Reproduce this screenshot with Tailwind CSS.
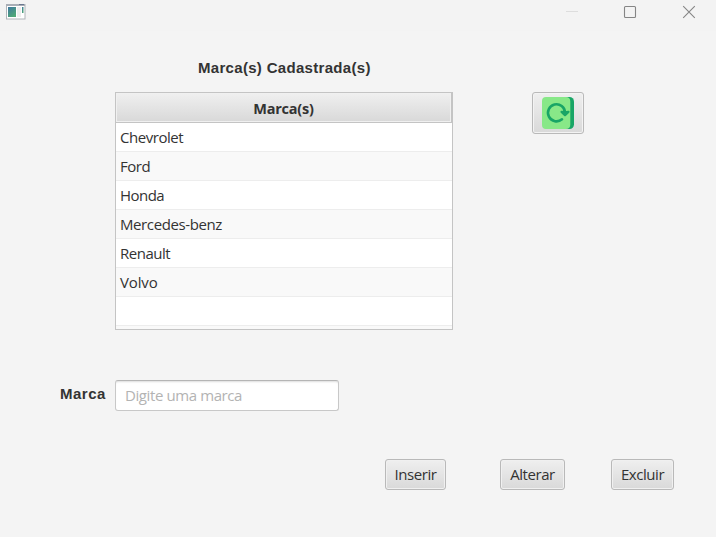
<!DOCTYPE html>
<html lang="pt-BR">
<head>
<meta charset="utf-8">
<title>Marcas</title>
<script src="https://cdn.jsdelivr.net/npm/@tailwindcss/browser@4"></script>
</head>
<body class="w-[716px] h-[537px] overflow-hidden bg-[#f4f4f4] text-[#333333] font-['Open_Sans','Noto_Sans',sans-serif] text-[15px] leading-5">
<header class="h-[31px] bg-[#f3f3f3] flex items-start justify-between">
  <svg class="ml-[6px] mt-1" width="20" height="16" viewBox="0 0 20 16">
    <defs><linearGradient id="g" x1="0" y1="0" x2="0.6" y2="1"><stop offset="0" stop-color="#3f78a0"/><stop offset="1" stop-color="#4fa877"/></linearGradient></defs>
    <rect x="0.5" y="0.5" width="18.5" height="14.5" fill="#fff" stroke="#b0b4b9"/>
    <rect x="0" y="0" width="19" height="2" fill="#a9aeb6"/><rect x="13" y="0" width="5" height="1" fill="#6b7890"/>
    <rect x="2" y="3" width="8" height="10" fill="url(#g)"/>
    <rect x="11" y="3" width="4" height="10" fill="#eeeeee"/>
    <rect x="16" y="3" width="1.5" height="6" fill="url(#g)"/>
  </svg>
  <svg class="mr-5" width="131" height="24" viewBox="0 0 131 24" fill="none" stroke="#858585">
    <path d="M1 11.5h12" stroke="#dddddd"/>
    <rect x="59.5" y="6.5" width="11" height="11" rx="1" stroke-width="1.1"/>
    <path d="M118.2 6.2l11.6 11.6M129.8 6.2l-11.6 11.6" stroke-width="1.1"/>
  </svg>
</header>
<main>
  <h1 class="ml-[198px] mt-[27px] h-[34px] font-['Liberation_Sans',sans-serif] font-bold text-[15px] tracking-[0.31px] leading-5 whitespace-nowrap">Marca(s) Cadastrada(s)</h1>
  <div class="flex items-start ml-[115px] gap-[79px]">
    <div class="w-[338px] h-[238px] border border-[#c4c4c4] bg-white overflow-hidden">
      <div class="h-[30px] border-b border-r border-[#c4c4c4] bg-[#f0f0f0] p-px">
        <div class="h-full bg-linear-to-b from-[#efefef] to-[#d9d9d9] flex items-center justify-center font-bold text-[14.5px]"><span class="relative top-px tracking-[-0.25px]">Marca(s)</span></div>
      </div>
      <div class="h-[29px] border-b border-[#ededed] pl-1 pt-1"><span class="tracking-[-0.45px]">Chevrolet</span></div>
      <div class="h-[29px] border-b border-[#ededed] pl-1 pt-1 bg-[#f9f9f9]"><span class="tracking-[-0.45px]">Ford</span></div>
      <div class="h-[29px] border-b border-[#ededed] pl-1 pt-1"><span class="tracking-[-0.55px]">Honda</span></div>
      <div class="h-[29px] border-b border-[#ededed] pl-1 pt-1 bg-[#f9f9f9]"><span class="tracking-[-0.4px]">Mercedes-benz</span></div>
      <div class="h-[29px] border-b border-[#ededed] pl-1 pt-1"><span class="tracking-[-0.5px]">Renault</span></div>
      <div class="h-[29px] border-b border-[#ededed] pl-1 pt-1 bg-[#f9f9f9]"><span class="tracking-[-0.15px]">Volvo</span></div>
      <div class="h-[29px] border-b border-[#ededed]"></div>
      <div class="h-[3px] bg-[#f9f9f9]"></div>
    </div>
    <button aria-label="Atualizar" class="w-[52px] h-[42px] rounded-[3px] border border-[#b9b9b9] bg-linear-to-b from-[#efefef] to-[#d9d9d9] shadow-[inset_0_0_0_1px_#f3f3f3] flex items-start justify-center pt-1">
      <svg width="32" height="32" viewBox="0 0 32 32" fill="none">
        <path d="M24 0H27.5A4.5 4.5 0 0 1 32 4.5V27.5A4.5 4.5 0 0 1 27.5 32H24Z" fill="#18a566"/>
        <path d="M4 0H24a4.5 4.5 0 0 1 4.3 4.5V27.5A4.5 4.5 0 0 1 24 32H4A4 4 0 0 1 0 28V4A4 4 0 0 1 4 0Z" fill="#88e888"/>
        <path d="M20 22.3A8.5 8.5 0 1 1 23 15.7V17" stroke="#18a566" stroke-width="2.6" stroke-linecap="round"/>
        <path d="M19.6 14.9L23 18L26.4 14.9L23 15.5Z" fill="#18a566" stroke="#18a566" stroke-width="2.4" stroke-linecap="round" stroke-linejoin="round"/>
      </svg>
    </button>
  </div>
  <div class="flex items-start mt-[50px] ml-[60px]">
    <label for="m" class="w-[55px] mt-1 font-['Liberation_Sans',sans-serif] font-bold text-[15px] tracking-[0.5px] leading-5">Marca</label>
    <input id="m" placeholder="Digite uma marca" class="w-[224px] h-[31px] rounded-[3px] border border-[#c8c8c8] border-t-[#b5b5b5] bg-white shadow-[inset_0_2px_2px_-1px_#dddddd] pl-[9px] pb-[2px] tracking-[-0.4px] placeholder:text-[#b3b3b3]">
  </div>
  <div class="flex mt-12 ml-[385px] tracking-[-0.45px]">
    <button class="w-[61px] h-[31px] pb-[2px] rounded-[3px] border border-[#b9b9b9] bg-linear-to-b from-[#efefef] to-[#d9d9d9] shadow-[inset_0_0_0_1px_#f0f0f0]">Inserir</button>
    <button class="ml-[54px] w-[65px] h-[31px] pb-[2px] rounded-[3px] border border-[#b9b9b9] bg-linear-to-b from-[#efefef] to-[#d9d9d9] shadow-[inset_0_0_0_1px_#f0f0f0]">Alterar</button>
    <button class="ml-[46px] w-[63px] h-[31px] pb-[2px] rounded-[3px] border border-[#b9b9b9] bg-linear-to-b from-[#efefef] to-[#d9d9d9] shadow-[inset_0_0_0_1px_#f0f0f0]">Excluir</button>
  </div>
</main>
</body>
</html>
